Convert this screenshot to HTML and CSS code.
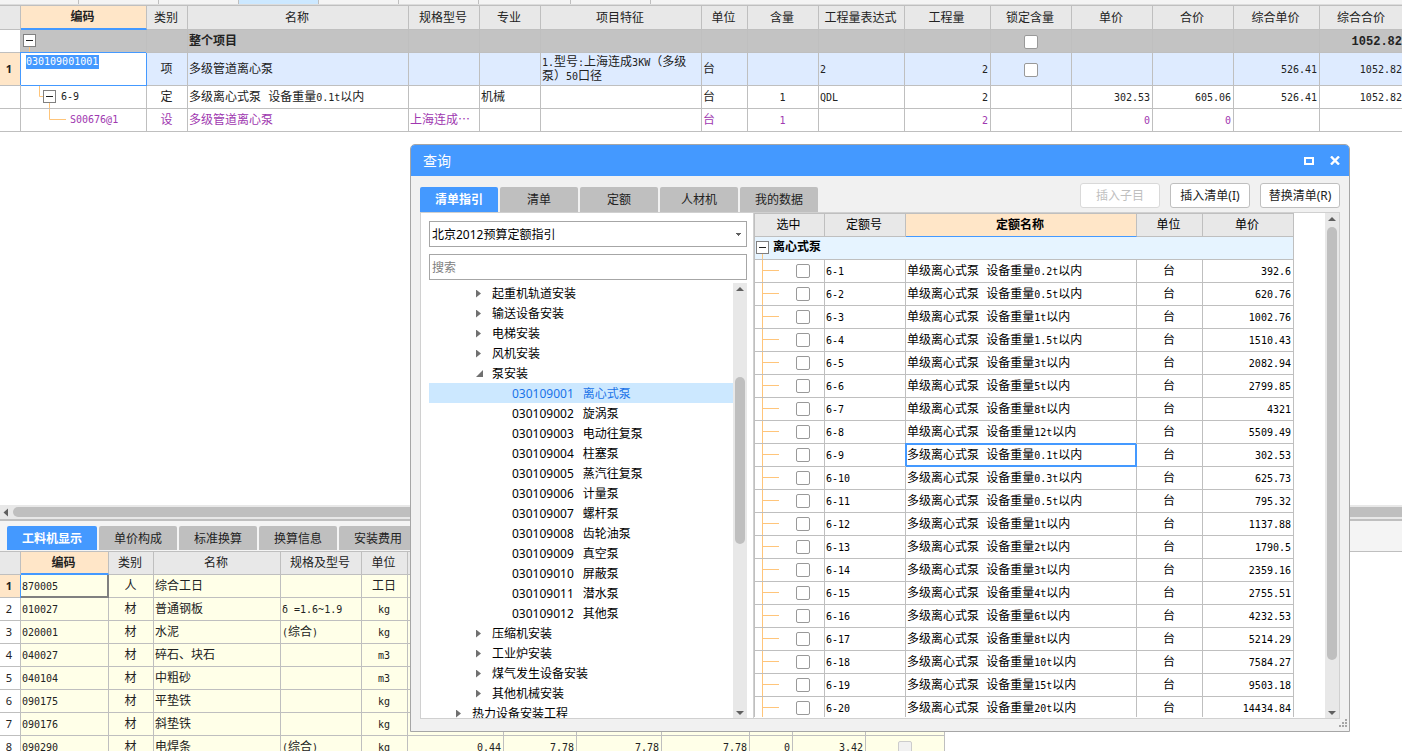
FILE: index.html
```html
<!DOCTYPE html>
<html lang="zh-CN">
<head>
<meta charset="utf-8">
<title>查询</title>
<link rel="stylesheet" href="styles.css">
</head>
<body>
<div class="app">
  <div class="strip"><i class="s79"></i><i></i><i></i><i class="on"></i><i></i><i></i><i class="s92"></i><i></i></div>

  <main class="sheet">
    <table class="grid main-grid">
      <colgroup><col class="w21"><col class="w126"><col class="w41"><col class="w221"><col class="w71"><col class="w61"><col class="w161"><col class="w46"><col class="w71"><col class="w86"><col class="w86"><col class="w81"><col class="w81"><col class="w81"><col class="w86"><col class="w85"></colgroup>
      <thead>
        <tr><th></th><th class="sorted">编码</th><th>类别</th><th>名称</th><th>规格型号</th><th>专业</th><th>项目特征</th><th>单位</th><th>含量</th><th>工程量表达式</th><th>工程量</th><th>锁定含量</th><th>单价</th><th>合价</th><th>综合单价</th><th>综合合价</th></tr>
      </thead>
      <tbody>
        <tr class="total"><td class="rowno"></td><td class="tree"><svg width="20" height="22"><path class="br" d="M8.5 17V22"/><rect class="bx" x="2.500" y="4.500" width="12" height="12"/><path class="mn" d="M5 10.500H12"/></svg></td><td></td><td>整个项目</td><td></td><td></td><td></td><td></td><td></td><td></td><td></td><td class="c"><input type="checkbox" aria-label="锁定含量"></td><td></td><td></td><td></td><td class="r sum">1052.82</td></tr>
        <tr class="picked"><td class="rowno cur">1</td><td class="edit"><input class="code" type="text" value="030109001001" aria-label="编码"></td><td class="c">项</td><td>多级管道离心泵</td><td></td><td></td><td class="wrap"><span class="n">1.</span>型号<span class="n">:</span>上海连成<span class="n">3KW</span>（多级<br>泵）<span class="n">50</span>口径</td><td>台</td><td></td><td class="num">2</td><td class="r num">2</td><td class="c"><input type="checkbox" aria-label="锁定含量"></td><td></td><td></td><td class="r num">526.41</td><td class="r num">1052.82</td></tr>
        <tr><td class="rowno"></td><td class="tree"><span class="node"><svg width="40" height="22"><path class="br" d="M18.500 0V10.500H22"/><path class="br" d="M28.500 17V22"/><rect class="bx" x="22.500" y="4.500" width="12" height="12"/><path class="mn" d="M25 10.500H32"/></svg><span class="n">6-9</span></span></td><td class="c">定</td><td>多级离心式泵 设备重量<span class="n">0.1t</span>以内</td><td></td><td>机械</td><td></td><td>台</td><td class="c num">1</td><td class="num">QDL</td><td class="r num">2</td><td></td><td class="r num">302.53</td><td class="r num">605.06</td><td class="r num">526.41</td><td class="r num">1052.82</td></tr>
        <tr class="violet"><td class="rowno"></td><td class="tree"><span class="node"><svg width="49" height="22"><path class="br" d="M28.500 0V10.500H45"/></svg><span class="n">S00676@1</span></span></td><td class="c">设</td><td>多级管道离心泵</td><td>上海连成⋯</td><td></td><td></td><td>台</td><td class="c num">1</td><td></td><td class="r num">2</td><td></td><td class="r num">0</td><td class="r num">0</td><td></td><td></td></tr>
      </tbody>
    </table>
  </main>

  <section class="lower">
    <div class="hbar"><svg width="13" height="13"><path d="M8 2.500V10.500L3.500 6.500Z"/></svg><div class="hthumb"></div></div>
    <nav class="tabs lower-tabs">
      <button class="tab first active">工料机显示</button><button class="tab">单价构成</button><button class="tab">标准换算</button><button class="tab">换算信息</button><button class="tab">安装费用</button>
    </nav>
    <table class="grid res-grid">
      <colgroup><col class="w21"><col class="w88"><col class="w45"><col class="w127"><col class="w81"><col class="w46"><col class="w96"><col class="w73"><col class="w85"><col class="w88"><col class="w43"><col class="w73"><col class="w79"></colgroup>
      <thead><tr><th></th><th class="sorted">编码</th><th>类别</th><th>名称</th><th>规格及型号</th><th>单位</th><th></th><th></th><th></th><th></th><th></th><th></th><th></th></tr></thead>
      <tbody>
        <tr><td class="rowno cur">1</td><td class="num focus">870005</td><td class="c">人</td><td>综合工日</td><td></td><td class="c">工日</td><td></td><td></td><td></td><td></td><td></td><td></td><td></td></tr>
        <tr><td class="rowno">2</td><td class="num">010027</td><td class="c">材</td><td>普通钢板</td><td><span class="n">δ =1.6~1.9</span></td><td class="c num">kg</td><td></td><td></td><td></td><td></td><td></td><td></td><td></td></tr>
        <tr><td class="rowno">3</td><td class="num">020001</td><td class="c">材</td><td>水泥</td><td><span class="n">(</span>综合<span class="n">)</span></td><td class="c num">kg</td><td></td><td></td><td></td><td></td><td></td><td></td><td></td></tr>
        <tr><td class="rowno">4</td><td class="num">040027</td><td class="c">材</td><td>碎石、块石</td><td></td><td class="c num">m3</td><td></td><td></td><td></td><td></td><td></td><td></td><td></td></tr>
        <tr><td class="rowno">5</td><td class="num">040104</td><td class="c">材</td><td>中粗砂</td><td></td><td class="c num">m3</td><td></td><td></td><td></td><td></td><td></td><td></td><td></td></tr>
        <tr><td class="rowno">6</td><td class="num">090175</td><td class="c">材</td><td>平垫铁</td><td></td><td class="c num">kg</td><td></td><td></td><td></td><td></td><td></td><td></td><td></td></tr>
        <tr><td class="rowno">7</td><td class="num">090176</td><td class="c">材</td><td>斜垫铁</td><td></td><td class="c num">kg</td><td></td><td></td><td></td><td></td><td></td><td></td><td></td></tr>
        <tr><td class="rowno">8</td><td class="num">090290</td><td class="c">材</td><td>电焊条</td><td><span class="n">(</span>综合<span class="n">)</span></td><td class="c num">kg</td><td class="r num">0.44</td><td class="r num">7.78</td><td class="r num">7.78</td><td class="r num">7.78</td><td class="r num">0</td><td class="r num">3.42</td><td class="c"><input type="checkbox" disabled aria-label="是否暂估"></td></tr>
      </tbody>
    </table>
  </section>

  <div class="dialog" role="dialog" aria-labelledby="dlg-title">
    <header class="title"><h1 id="dlg-title">查询</h1>
      <button class="wb" aria-label="最大化"><svg width="10" height="8"><path fill="#fff" fill-rule="evenodd" d="M0 0H10V8H0ZM2 2V6H8V2Z"/></svg></button>
      <button class="wb" aria-label="关闭"><svg width="10" height="9"><path stroke="#fff" stroke-width="2.400" d="M1 .5L9 8.500M9 .5L1 8.500"/></svg></button>
    </header>
    <div class="bar">
      <nav class="tabs"><button class="tab active">清单指引</button><button class="tab">清单</button><button class="tab">定额</button><button class="tab">人材机</button><button class="tab">我的数据</button></nav>
      <div class="acts"><button class="btn" disabled>插入子目</button><button class="btn">插入清单(I)</button><button class="btn">替换清单(R)</button></div>
    </div>
    <div class="panes">
      <aside class="side">
        <select class="field combo" aria-label="定额指引"><option>北京2012预算定额指引</option></select>
        <input class="field" type="text" placeholder="搜索" aria-label="搜索">
        <div class="treebox">
          <ul class="nodes">
            <li class="l2">起重机轨道安装</li><li class="l2">输送设备安装</li><li class="l2">电梯安装</li><li class="l2">风机安装</li><li class="l2 open">泵安装</li>
            <li class="l3 sel"><b>030109001</b>离心式泵</li><li class="l3"><b>030109002</b>旋涡泵</li><li class="l3"><b>030109003</b>电动往复泵</li><li class="l3"><b>030109004</b>柱塞泵</li><li class="l3"><b>030109005</b>蒸汽往复泵</li><li class="l3"><b>030109006</b>计量泵</li><li class="l3"><b>030109007</b>螺杆泵</li><li class="l3"><b>030109008</b>齿轮油泵</li><li class="l3"><b>030109009</b>真空泵</li><li class="l3"><b>030109010</b>屏蔽泵</li><li class="l3"><b>030109011</b>潜水泵</li><li class="l3"><b>030109012</b>其他泵</li>
            <li class="l2">压缩机安装</li><li class="l2">工业炉安装</li><li class="l2">煤气发生设备安装</li><li class="l2">其他机械安装</li><li class="l1">热力设备安装工程</li>
          </ul>
          <div class="vbar"><i class="up"></i><div class="track"><div class="before-tree"></div><div class="vthumb tree-thumb"></div></div><i class="down"></i></div>
        </div>
      </aside>
      <div class="quota">
        <div class="quota-clip">
        <table class="grid quota-grid">
          <colgroup><col class="w71"><col class="w81"><col class="w231"><col class="w66"><col class="w91"></colgroup>
          <thead><tr><th>选中</th><th>定额号</th><th class="sorted">定额名称</th><th>单位</th><th>单价</th></tr></thead>
          <tbody>
            <tr class="group"><td colspan="5"><span class="node"><svg width="18" height="22"><path class="br" d="M7.500 17V22"/><rect class="bx" x="1.500" y="4.500" width="12" height="12"/><path class="mn" d="M4 10.500H11"/></svg>离心式泵</span></td></tr>
            <tr><td class="pick"><input type="checkbox" aria-label="6-1"></td><td class="num">6-1</td><td>单级离心式泵 设备重量<span class="n">0.2t</span>以内</td><td class="c">台</td><td class="r num">392.6</td></tr>
            <tr><td class="pick"><input type="checkbox" aria-label="6-2"></td><td class="num">6-2</td><td>单级离心式泵 设备重量<span class="n">0.5t</span>以内</td><td class="c">台</td><td class="r num">620.76</td></tr>
            <tr><td class="pick"><input type="checkbox" aria-label="6-3"></td><td class="num">6-3</td><td>单级离心式泵 设备重量<span class="n">1t</span>以内</td><td class="c">台</td><td class="r num">1002.76</td></tr>
            <tr><td class="pick"><input type="checkbox" aria-label="6-4"></td><td class="num">6-4</td><td>单级离心式泵 设备重量<span class="n">1.5t</span>以内</td><td class="c">台</td><td class="r num">1510.43</td></tr>
            <tr><td class="pick"><input type="checkbox" aria-label="6-5"></td><td class="num">6-5</td><td>单级离心式泵 设备重量<span class="n">3t</span>以内</td><td class="c">台</td><td class="r num">2082.94</td></tr>
            <tr><td class="pick"><input type="checkbox" aria-label="6-6"></td><td class="num">6-6</td><td>单级离心式泵 设备重量<span class="n">5t</span>以内</td><td class="c">台</td><td class="r num">2799.85</td></tr>
            <tr><td class="pick"><input type="checkbox" aria-label="6-7"></td><td class="num">6-7</td><td>单级离心式泵 设备重量<span class="n">8t</span>以内</td><td class="c">台</td><td class="r num">4321</td></tr>
            <tr><td class="pick"><input type="checkbox" aria-label="6-8"></td><td class="num">6-8</td><td>单级离心式泵 设备重量<span class="n">12t</span>以内</td><td class="c">台</td><td class="r num">5509.49</td></tr>
            <tr><td class="pick"><input type="checkbox" aria-label="6-9"></td><td class="num">6-9</td><td class="ring">多级离心式泵 设备重量<span class="n">0.1t</span>以内</td><td class="c">台</td><td class="r num">302.53</td></tr>
            <tr><td class="pick"><input type="checkbox" aria-label="6-10"></td><td class="num">6-10</td><td>多级离心式泵 设备重量<span class="n">0.3t</span>以内</td><td class="c">台</td><td class="r num">625.73</td></tr>
            <tr><td class="pick"><input type="checkbox" aria-label="6-11"></td><td class="num">6-11</td><td>多级离心式泵 设备重量<span class="n">0.5t</span>以内</td><td class="c">台</td><td class="r num">795.32</td></tr>
            <tr><td class="pick"><input type="checkbox" aria-label="6-12"></td><td class="num">6-12</td><td>多级离心式泵 设备重量<span class="n">1t</span>以内</td><td class="c">台</td><td class="r num">1137.88</td></tr>
            <tr><td class="pick"><input type="checkbox" aria-label="6-13"></td><td class="num">6-13</td><td>多级离心式泵 设备重量<span class="n">2t</span>以内</td><td class="c">台</td><td class="r num">1790.5</td></tr>
            <tr><td class="pick"><input type="checkbox" aria-label="6-14"></td><td class="num">6-14</td><td>多级离心式泵 设备重量<span class="n">3t</span>以内</td><td class="c">台</td><td class="r num">2359.16</td></tr>
            <tr><td class="pick"><input type="checkbox" aria-label="6-15"></td><td class="num">6-15</td><td>多级离心式泵 设备重量<span class="n">4t</span>以内</td><td class="c">台</td><td class="r num">2755.51</td></tr>
            <tr><td class="pick"><input type="checkbox" aria-label="6-16"></td><td class="num">6-16</td><td>多级离心式泵 设备重量<span class="n">6t</span>以内</td><td class="c">台</td><td class="r num">4232.53</td></tr>
            <tr><td class="pick"><input type="checkbox" aria-label="6-17"></td><td class="num">6-17</td><td>多级离心式泵 设备重量<span class="n">8t</span>以内</td><td class="c">台</td><td class="r num">5214.29</td></tr>
            <tr><td class="pick"><input type="checkbox" aria-label="6-18"></td><td class="num">6-18</td><td>多级离心式泵 设备重量<span class="n">10t</span>以内</td><td class="c">台</td><td class="r num">7584.27</td></tr>
            <tr><td class="pick"><input type="checkbox" aria-label="6-19"></td><td class="num">6-19</td><td>多级离心式泵 设备重量<span class="n">15t</span>以内</td><td class="c">台</td><td class="r num">9503.18</td></tr>
            <tr><td class="pick"><input type="checkbox" aria-label="6-20"></td><td class="num">6-20</td><td>多级离心式泵 设备重量<span class="n">20t</span>以内</td><td class="c">台</td><td class="r num">14434.84</td></tr>
          </tbody>
        </table>
        </div>
        <div class="vbar"><i class="up"></i><div class="track"><div class="vthumb quota-thumb"></div></div><i class="down"></i></div>
      </div>
    </div>
    <svg class="grip" width="8" height="8"><path fill="#a6a6a6" d="M6 0h2v2H6zM3 3h2v2H3zM6 3h2v2H6zM0 6h2v2H0zM3 6h2v2H3zM6 6h2v2H6z"/></svg>
  </div>
</div>
</body>
</html>
```
FILE: styles.css
```css
* { box-sizing: border-box; }

body {
  margin: 0;
  color: #222;
  font: 12px/14px "Noto Sans", "Noto Sans CJK SC", sans-serif;
}

button, input, select { font: inherit; color: inherit; }
button { padding: 0; border: 0; cursor: pointer; }

.app {
  position: relative;
  display: flex;
  flex-direction: column;
  height: 100vh;
  overflow: hidden;
  background: #fff;
}

.strip {
  display: flex;
  flex: none;
  height: 5px;
  background: #f4f4f4;
  border-bottom: 1px solid #dcdcdc;
}
.strip i { width: 80px; border-right: 1px solid #bfbfbf; }
.strip .s79 { width: 79px; }
.strip .s92 { width: 92px; }
.strip .on { background: #cce8ff; }

.sheet { flex: 1; min-height: 0; overflow: hidden; border-top: 1px solid #bfbfbf; }

/* Data grids */
.grid {
  table-layout: fixed;
  border-collapse: separate;
  border-spacing: 0;
  font-family: "Liberation Mono", "Noto Sans CJK SC", monospace;
}
.main-grid { width: 1405px; }
.res-grid { width: 945px; }
.quota-grid { width: 540px; }

.w21 { width: 21px; }
.w41 { width: 41px; }
.w43 { width: 43px; }
.w45 { width: 45px; }
.w46 { width: 46px; }
.w61 { width: 61px; }
.w66 { width: 66px; }
.w71 { width: 71px; }
.w73 { width: 73px; }
.w79 { width: 79px; }
.w81 { width: 81px; }
.w85 { width: 85px; }
.w86 { width: 86px; }
.w88 { width: 88px; }
.w91 { width: 91px; }
.w96 { width: 96px; }
.w126 { width: 126px; }
.w127 { width: 127px; }
.w161 { width: 161px; }
.w221 { width: 221px; }
.w231 { width: 231px; }

.grid th, .grid td {
  height: 23px;
  padding: 1px 2px 0 1px;
  border: solid #bfbfbf;
  border-width: 0 1px 1px 0;
  text-align: left;
  vertical-align: middle;
  white-space: nowrap;
  overflow: hidden;
}
.grid th { padding: 2px 2px 0 0; background: #e8e8e8; font-weight: 400; text-align: center; }
.main-grid th { height: 24px; }
.grid .sorted { background: #ffe6c8; font-weight: 700; border-bottom: 2px solid #4499ff; }
.quota-grid .sorted { border-bottom-width: 1px; }
.grid .c { text-align: center; }
.grid .r { text-align: right; }
.num, .n { font-family: "DejaVu Sans Mono", monospace; font-size: 10px; }
.n { white-space: pre; }

.grid .rowno { padding: 0 2px 0 0; text-align: center; font: 11px/14px "Noto Sans", sans-serif; background: #fff; }
.grid .rowno.cur { background: #ffe6c8; font-weight: 700; }
.grid .total td { background: #c3c3c3; font-weight: 700; }
.grid .total .rowno { background: #fff; }
.grid .picked td { height: 33px; background: #deebff; }
.grid .picked .rowno { background: #ffe6c8; }
.grid .picked .edit {
  padding: 2px 5px;
  background: #fff;
  box-shadow: -1px -1px #4499ff;
  border-color: #4499ff;
  vertical-align: top;
}
.code {
  display: block;
  width: 73px;
  height: 14px;
  padding: 0;
  border: 0;
  outline: 0;
  background: #4499ff;
  color: #fff;
  font-family: "DejaVu Sans Mono", monospace;
  font-size: 10px;
}
.violet td { color: #a038b0; }
.grid .tree, .grid .group td { padding: 0; }
.tree svg, .node svg { display: block; flex: none; }
.node { display: flex; align-items: center; }
.br { fill: none; stroke: #ffc57a; }
.bx { fill: #fff; stroke: #808080; }
.mn { stroke: #222; }

.res-grid td { background: #ffffe8; }
.grid .focus { box-shadow: -1px 0 #4499ff, inset -1px -1px #808080; border-color: #808080; }

input[type="checkbox"] {
  display: block;
  width: 14px;
  height: 14px;
  margin: 0 auto;
  appearance: none;
  background: #fff;
  border: 1px solid #999;
  border-radius: 2px;
}
input[type="checkbox"]:disabled { background: #f1f1f1; border-color: #ccc; }

/* Lower pane */
.lower { flex: 0 0 246px; overflow: hidden; }
.hbar {
  display: flex;
  align-items: center;
  height: 14px;
  background: #e8e8e8;
}
.hbar svg { fill: #606060; }
.hthumb { flex: 1; height: 10px; border-radius: 5px 0 0 5px; background: #bfbfbf; }
.tabs { display: flex; gap: 2px; }
.lower-tabs {
  height: 33px;
  padding: 5px 7px 2px;
  background: #f4f4f4;
  border-top: 2px solid #bfbfbf;
  border-bottom: 1px solid #bfbfbf;
}
.tab {
  width: 78px;
  height: 25px;
  padding-top: 1px;
  border-radius: 2px 2px 0 0;
  background: #bfbfbf;
}
.lower-tabs .tab { height: 24px; padding-top: 2px; }
.lower-tabs .first { width: 90px; }
.tab.active { background: #4499ff; color: #fff; font-weight: 700; }

/* Query window */
.dialog {
  position: absolute;
  top: 144px;
  right: 52px;
  bottom: 19px;
  left: 410px;
  display: flex;
  flex-direction: column;
  background: #f1f1f1;
  border: 1px solid #a6a6a6;
  border-radius: 5px 5px 0 0;
  color: #000;
}
.title {
  display: flex;
  flex: none;
  align-items: center;
  gap: 16px;
  height: 31px;
  padding: 0 9px 0 12px;
  background: #4499ff;
  border-radius: 4px 4px 0 0;
  color: #fff;
}
.title h1 { flex: 1; margin: 0; font-size: 14px; font-weight: 400; line-height: 20px; }
.wb { width: 10px; height: 10px; background: none; }
.wb svg { display: block; margin: auto; }
.bar {
  display: flex;
  justify-content: space-between;
  align-items: flex-end;
  height: 36px;
  padding: 0 9px;
}
.bar .tab { color: #222; }
.bar .tab.active { color: #fff; }
.acts { display: flex; gap: 10px; align-self: flex-start; padding-top: 7px; }
.btn { width: 80px; height: 25px; padding-top: 1px; background: #fff; border: 1px solid #bfbfbf; border-radius: 3px; color: #222; }
.btn:disabled { color: #bfbfbf; border-color: #d9d9d9; }

.panes {
  display: flex;
  flex: 1;
  min-height: 0;
  margin: 0 9px 12px;
  background: #fff;
  border: 1px solid #d0d0d0;
}
.side {
  display: flex;
  flex: 0 0 333px;
  flex-direction: column;
  padding: 8px 6px 0 8px;
  border-right: 1px solid #d0d0d0;
}
.field {
  flex: none;
  width: 100%;
  height: 26px;
  margin: 0 0 7px;
  padding: 1px 2px 0;
  background: #fff;
  border: 1px solid #a6a6a6;
  border-radius: 0;
  outline: 0;
}
.field::placeholder { color: #808080; opacity: 1; }
.combo {
  appearance: none;
  background: conic-gradient(from -45deg at 50% 100%, #606060 90deg, #fff 0) right 5px center / 6px 3px no-repeat #fff;
  background-image: conic-gradient(from -45deg at 50% 100%, #606060 90deg, transparent 0);
}
.treebox { display: flex; flex: 1; min-height: 0; margin-top: -4px; }
.nodes { flex: 1; margin: 0; padding: 0; list-style: none; overflow: hidden; }
.nodes li { display: flex; align-items: center; height: 20px; padding-top: 1px; white-space: nowrap; }
.nodes b { font-weight: 400; margin-right: 9px; }
.l1::before, .l2::before {
  content: "";
  width: 5px;
  height: 8px;
  margin-right: 11px;
  background: #707070;
  clip-path: polygon(0 0, 100% 50%, 0 100%);
}
.l1 { padding-left: 27px; }
.l2 { padding-left: 47px; }
.l2.open::before { width: 7px; height: 7px; margin-right: 9px; clip-path: polygon(100% 0, 100% 100%, 0 100%); }
.l3 { padding-left: 83px; }
.nodes .sel { background: #cce8ff; color: #1a73e8; }

.vbar {
  display: flex;
  flex: 0 0 14px;
  flex-direction: column;
  align-items: center;
  padding: 4px 0 3px;
  background: #e8e8e8;
}
.vbar i { width: 8px; height: 4px; background: #606060; }
.up { clip-path: polygon(50% 0, 100% 100%, 0 100%); }
.down { clip-path: polygon(0 0, 100% 0, 50% 100%); }
.track { display: flex; flex: 1; flex-direction: column; width: 10px; padding: 6px 0; }
.vthumb { border-radius: 5px; background: #bfbfbf; }
.before-tree { flex: 80; }
.tree-thumb { flex: 167; }
.track:has(.tree-thumb)::after { content: ""; flex: 161; }
.quota-thumb { flex: 434; }
.track:has(.quota-thumb)::after { content: ""; flex: 45; }

.quota { display: flex; flex: 1; justify-content: space-between; min-width: 0; }
.quota-clip { overflow: hidden; margin-bottom: 1px; }
.quota-grid { border-top: 1px solid #bfbfbf; }
.quota-grid th:first-child, .quota-grid td:first-child { border-left: 1px solid #bfbfbf; }
.grid .group td { background: #e6f4ff; font-weight: 700; }
.grid .pick {
  padding: 0;
  background:
    linear-gradient(#ffc57a, #ffc57a) 7px 0 / 1px 100% no-repeat,
    linear-gradient(#ffc57a, #ffc57a) 7px 10px / 17px 1px no-repeat;
}
.pick input { margin-left: 41px; }
.grid .ring {
  border-color: #4499ff;
  box-shadow: -1px -1px #4499ff, inset 1px 1px #4499ff, inset -1px -1px #4499ff;
}

.grip { position: absolute; right: 2px; bottom: 4px; }
```
